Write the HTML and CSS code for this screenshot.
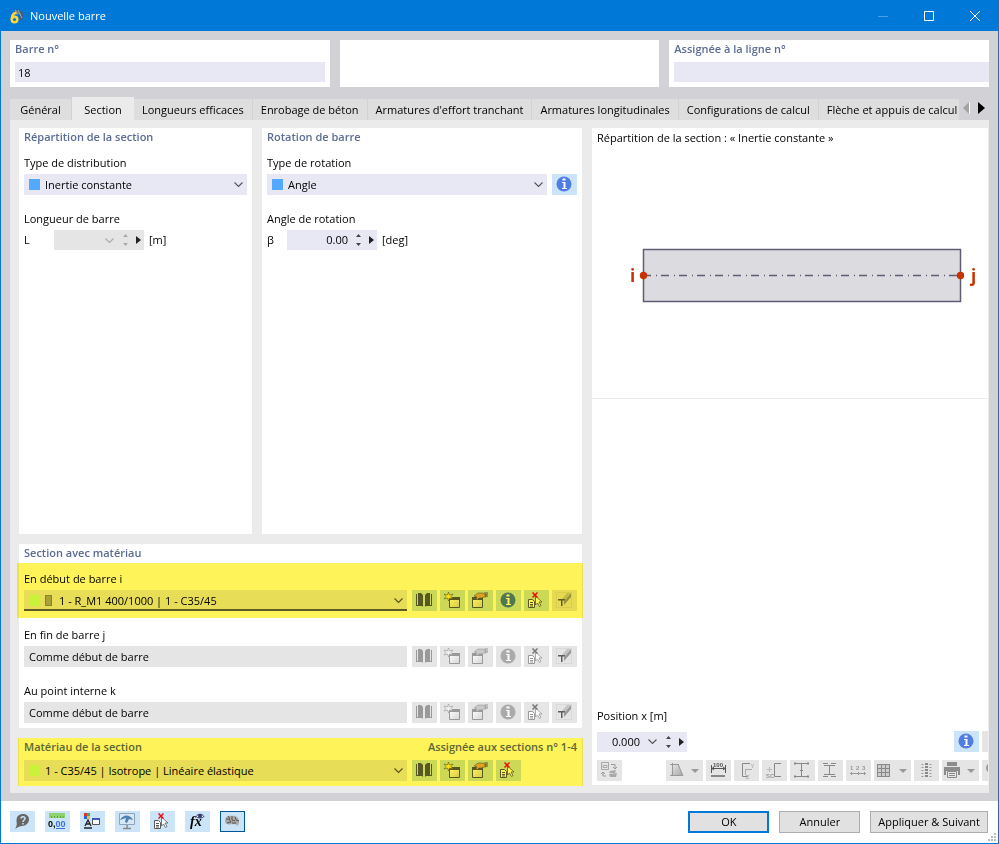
FILE: index.html
```
<!DOCTYPE html>
<html lang="fr">
<head>
	<meta charset="UTF-8">
	<title>Nouvelle barre</title>
	<meta name="viewport" content="width=device-width,initial-scale=1">
	<link rel="stylesheet" href="styles.css">
</head>
<body>
	<!-- icon set -->
	<svg class="defs" width="0" height="0" aria-hidden="true">
		<defs>
			<linearGradient id="fade" x1="0" y1="0" x2="1" y2="1">
				<stop offset="0" stop-color="#eee"/><stop offset="1" stop-color="#777"/>
			</linearGradient>
			<linearGradient id="paper" x1="0" y1="0" x2="1" y2="1">
				<stop offset="0" stop-color="#fff"/><stop offset="1" stop-color="#d4d4d4"/>
			</linearGradient>
		</defs>
		<symbol id="book" viewBox="0 0 25 21">
			<path d="M4 4h1v11h5v1H4zM20 4h-1v11h-5v1h6z" fill="currentColor"/>
			<path d="M6 3h3l2 2v12l-2-2H6zM18 3h-3l-2 2v12l2-2h3z" fill="currentColor"/>
		</symbol>
		<symbol id="new" viewBox="0 0 25 21">
			<path d="M9.500 8.500h10v9h-10z" fill="url(#paper)" stroke="currentColor"/>
			<path d="M9 7h11v3H9z" fill="currentColor"/>
			<path d="M8.500 2l1 3 3.500-1-2 2.500 2 2.500-3.500-1-1 3-1-3-3.500 1 2-2.500-2-2.500 3.500 1z" class="star" stroke="currentColor" stroke-width=".6"/>
		</symbol>
		<symbol id="edit" viewBox="0 0 25 21">
			<path d="M4.500 8.500h10v9h-10z" fill="url(#paper)" stroke="currentColor"/>
			<path d="M4 7h11v3H4z" fill="currentColor"/>
			<path d="M6 6l4-3h5l1 1h2v3h-2l-2 1h-3l-2 2-1-1 1-2z" class="hand" stroke="currentColor" stroke-width=".6"/>
			<path d="M16 2h4v5h-3z" fill="currentColor" opacity=".5"/>
		</symbol>
		<symbol id="info" viewBox="0 0 25 21">
			<circle cx="12" cy="10" r="7.500" class="disc"/>
			<path d="M10.500 4.500h3v2h-3zM10 8h3.500v6H15v1h-5v-1h1.500V9H10z" fill="#fff"/>
		</symbol>
		<symbol id="remove" viewBox="0 0 25 21">
			<path d="M4.500 9.500h4l2 2v6h-6z" fill="#fff" stroke="currentColor"/>
			<path d="M6 12.500h3M6 14.500h3M6 16h3" stroke="currentColor" fill="none"/>
			<path d="M11.500 6v9l2-2 2 3.500 1.500-1-2-3.500h3z" fill="#fff" stroke="currentColor" stroke-width=".8"/>
			<path d="M8.500 2.500l5 5M13.500 2.500l-5 5" class="cross" fill="none" stroke-width="1.500"/>
		</symbol>
		<symbol id="pencil" viewBox="0 0 25 21">
			<path d="M4.500 2.500h15v15h-15z" fill="none" stroke="currentColor" opacity=".15"/>
			<path d="M19 3v4l-7 8v-4z" fill="#999"/>
			<path d="M19 3h-4l-5 6 2 2z" fill="#c4c4c4"/>
			<path d="M6 9h7v1.500h-2.500V16H9v-5.500H6z" fill="#606060"/>
		</symbol>
		<symbol id="chevron" viewBox="0 0 11 7">
			<path d="M1.500 1.500l4 4 4-4" fill="none" stroke="currentColor" stroke-width="1.100"/>
		</symbol>
		<symbol id="updown" viewBox="0 0 7 12">
			<path d="M1 3l2.500-3L6 3zM1 9l2.500 3L6 9z" fill="currentColor"/>
		</symbol>
		<symbol id="right" viewBox="0 0 5 8">
			<path d="M0 0l5 4-5 4z" fill="currentColor"/>
		</symbol>
		<symbol id="down" viewBox="0 0 8 4">
			<path d="M0 0h8L4 4z" fill="currentColor"/>
		</symbol>
	</svg>

	<header class="titlebar">
		<svg class="app-icon" viewBox="0 0 16 16" aria-hidden="true">
			<path d="M3 5l5-4 6 3 1 4-3 5-2-2V6z" fill="#46607c"/>
			<path d="M4 5l5 1M6 2l6 5M9 2l4 8" stroke="#8fa9bd" fill="none"/>
			<path d="M7.500 4.500c-3 1-5 3-4.500 6.500" stroke="#fdd53b" stroke-width="2.500" fill="none"/>
			<circle cx="5.500" cy="11.500" r="2.800" stroke="#fdd53b" stroke-width="2.500" fill="none"/>
		</svg>
		<h1>Nouvelle barre</h1>
		<div class="win-buttons">
			<button type="button" aria-label="Réduire" disabled><svg viewBox="0 0 10 10"><path d="M0 5.500h10" stroke="#4aa0e6"/></svg></button>
			<button type="button" aria-label="Agrandir"><svg viewBox="0 0 10 10"><path d="M.5.5h9v9h-9z" stroke="#fff" fill="none"/></svg></button>
			<button type="button" aria-label="Fermer"><svg viewBox="0 0 10 10"><path d="M0 0l10 10M10 0L0 10" stroke="#fff"/></svg></button>
		</div>
	</header>

	<main class="frame">
		<div class="top">
			<div class="card">
				<label class="title" for="barre">Barre n°</label>
				<input class="field" id="barre" type="text" value="18">
			</div>
			<div class="card"></div>
			<div class="card card-cut">
				<label class="title" for="ligne">Assignée à la ligne n°</label>
				<input class="field" id="ligne" type="text">
			</div>
		</div>

		<div class="tabs">
			<div class="tablist" role="tablist">
				<button type="button" role="tab">Général</button>
				<button type="button" role="tab" class="active" aria-selected="true">Section</button>
				<button type="button" role="tab">Longueurs efficaces</button>
				<button type="button" role="tab">Enrobage de béton</button>
				<button type="button" role="tab">Armatures d'effort tranchant</button>
				<button type="button" role="tab">Armatures longitudinales</button>
				<button type="button" role="tab">Configurations de calcul</button>
				<button type="button" role="tab">Flèche et appuis de calcul</button>
			</div>
			<button type="button" class="scroll" aria-label="Onglets précédents" disabled><svg viewBox="0 0 7 12"><path d="M6 0v12L0 6z" fill="#a3a3a3"/><path d="M6.500 0v12" stroke="#fff"/></svg></button>
			<button type="button" class="scroll" aria-label="Onglets suivants"><svg viewBox="0 0 7 12"><path d="M0 0l7 6-7 6z" fill="#000"/></svg></button>
		</div>

		<div class="content">
			<div class="left">
				<section class="card">
					<h2 class="title">Répartition de la section</h2>
					<div class="group">
						<label for="distribution">Type de distribution</label>
						<div class="line">
							<div class="combo">
								<span class="swatch blue"></span>
								<select id="distribution"><option>Inertie constante</option></select>
								<svg class="chevron"><use href="#chevron"/></svg>
							</div>
						</div>
					</div>
					<div class="group">
						<span class="label">Longueur de barre</span>
						<div class="line">
							<label class="sym" for="longueur">L</label>
							<div class="spin disabled">
								<input id="longueur" type="text" disabled>
								<svg class="chevron"><use href="#chevron"/></svg>
								<svg class="updown"><use href="#updown"/></svg>
								<svg class="right"><use href="#right"/></svg>
							</div>
							<span>[m]</span>
						</div>
					</div>
				</section>

				<section class="card">
					<h2 class="title">Rotation de barre</h2>
					<div class="group">
						<label for="rotation">Type de rotation</label>
						<div class="line">
							<div class="combo">
								<span class="swatch blue"></span>
								<select id="rotation"><option>Angle</option></select>
								<svg class="chevron"><use href="#chevron"/></svg>
							</div>
							<button type="button" class="tool" aria-label="Informations"><svg><use href="#info"/></svg></button>
						</div>
					</div>
					<div class="group">
						<span class="label">Angle de rotation</span>
						<div class="line">
							<label class="sym small" for="angle">β</label>
							<div class="spin">
								<input id="angle" type="text" value="0.00">
								<svg class="updown"><use href="#updown"/></svg>
								<svg class="right"><use href="#right"/></svg>
							</div>
							<span>[deg]</span>
						</div>
					</div>
				</section>

				<section class="card wide">
					<h2 class="title">Section avec matériau</h2>
					<div class="group marked">
						<label for="debut">En début de barre i</label>
						<div class="line">
							<div class="combo focus">
								<span class="swatch green"></span>
								<span class="profile"></span>
								<select id="debut"><option>1 - R_M1 400/1000 | 1 - C35/45</option></select>
								<svg class="chevron"><use href="#chevron"/></svg>
							</div>
							<div class="tools">
								<button type="button" class="tool" aria-label="Bibliothèque"><svg><use href="#book"/></svg></button>
								<button type="button" class="tool" aria-label="Nouvelle section"><svg><use href="#new"/></svg></button>
								<button type="button" class="tool" aria-label="Modifier"><svg><use href="#edit"/></svg></button>
								<button type="button" class="tool" aria-label="Informations"><svg><use href="#info"/></svg></button>
								<button type="button" class="tool" aria-label="Supprimer"><svg><use href="#remove"/></svg></button>
								<button type="button" class="tool" aria-label="Dessiner" disabled><svg><use href="#pencil"/></svg></button>
							</div>
						</div>
					</div>
					<div class="group">
						<label for="fin">En fin de barre j</label>
						<div class="line">
							<input class="field" id="fin" type="text" value="Comme début de barre" disabled>
							<div class="tools">
								<button type="button" class="tool" aria-label="Bibliothèque" disabled><svg><use href="#book"/></svg></button>
								<button type="button" class="tool" aria-label="Nouvelle section" disabled><svg><use href="#new"/></svg></button>
								<button type="button" class="tool" aria-label="Modifier" disabled><svg><use href="#edit"/></svg></button>
								<button type="button" class="tool" aria-label="Informations" disabled><svg><use href="#info"/></svg></button>
								<button type="button" class="tool" aria-label="Supprimer" disabled><svg><use href="#remove"/></svg></button>
								<button type="button" class="tool" aria-label="Dessiner" disabled><svg><use href="#pencil"/></svg></button>
							</div>
						</div>
					</div>
					<div class="group">
						<label for="interne">Au point interne k</label>
						<div class="line">
							<input class="field" id="interne" type="text" value="Comme début de barre" disabled>
							<div class="tools">
								<button type="button" class="tool" aria-label="Bibliothèque" disabled><svg><use href="#book"/></svg></button>
								<button type="button" class="tool" aria-label="Nouvelle section" disabled><svg><use href="#new"/></svg></button>
								<button type="button" class="tool" aria-label="Modifier" disabled><svg><use href="#edit"/></svg></button>
								<button type="button" class="tool" aria-label="Informations" disabled><svg><use href="#info"/></svg></button>
								<button type="button" class="tool" aria-label="Supprimer" disabled><svg><use href="#remove"/></svg></button>
								<button type="button" class="tool" aria-label="Dessiner" disabled><svg><use href="#pencil"/></svg></button>
							</div>
						</div>
					</div>
				</section>

				<section class="card wide marked material">
					<div class="heads">
						<label class="title" for="materiau">Matériau de la section</label>
						<span class="title">Assignée aux sections n° 1-4</span>
					</div>
					<div class="line">
						<div class="combo">
							<span class="swatch green"></span>
							<select id="materiau"><option>1 - C35/45 | Isotrope | Linéaire élastique</option></select>
							<svg class="chevron"><use href="#chevron"/></svg>
						</div>
						<div class="tools">
							<button type="button" class="tool" aria-label="Bibliothèque"><svg><use href="#book"/></svg></button>
							<button type="button" class="tool" aria-label="Nouveau matériau"><svg><use href="#new"/></svg></button>
							<button type="button" class="tool" aria-label="Modifier"><svg><use href="#edit"/></svg></button>
							<button type="button" class="tool" aria-label="Supprimer"><svg><use href="#remove"/></svg></button>
						</div>
					</div>
				</section>
			</div>

			<section class="card preview">
				<div class="drawing">
					<p>Répartition de la section : « Inertie constante »</p>
					<svg viewBox="0 0 396 60">
						<path d="M51.500 4.500h317v52h-317z" fill="#dcdbe0" stroke="#5f5c73" stroke-width="1.500"/>
						<path d="M51 30.500h317" stroke="#5f5c73" stroke-width="1.500" stroke-dasharray="8 5 1 4"/>
						<circle cx="51.500" cy="30.500" r="3.700"/>
						<circle cx="368.500" cy="30.500" r="3.700"/>
						<text x="38" y="37">i</text>
						<text x="379" y="37">j</text>
					</svg>
				</div>
				<div class="graph">
					<label for="position">Position x [m]</label>
					<div class="line">
						<div class="spin">
							<input id="position" type="text" value="0.000">
							<svg class="chevron"><use href="#chevron"/></svg>
							<svg class="updown"><use href="#updown"/></svg>
							<svg class="right"><use href="#right"/></svg>
						</div>
						<div class="tools end">
							<button type="button" class="tool" aria-label="Informations"><svg><use href="#info"/></svg></button>
							<button type="button" class="tool cut" aria-label="Plus" disabled></button>
						</div>
					</div>
					<div class="toolbar">
						<button type="button" class="tool first" aria-label="Échanger" disabled>
							<svg viewBox="0 0 25 21"><path d="M4.500 2.500h7v7h-7zM6 5.500h4v2H6z" stroke="#aaa" fill="none"/><path d="M14 4.500h4v4M16 7l2 2 2-2M9 16H6v-4M4 14l2-2 2 2" stroke="#999" fill="none"/><path d="M13 11l6-1-1 3h-6zM12 14l8-1-1 4h-6z" fill="#aaa"/></svg>
						</button>
						<button type="button" class="tool drop" aria-label="Contraintes" disabled>
							<svg viewBox="0 0 25 21"><path d="M6 4h6l5 12H5z" fill="url(#fade)" opacity=".6"/><path d="M4 4.500h9M6.500 3v13M4 15.500h13M12 4l5 12" stroke="#999" fill="none"/></svg>
							<svg class="down"><use href="#down"/></svg>
						</button>
						<button type="button" class="tool" aria-label="Dimensions">
							<svg viewBox="0 0 25 21"><path d="M5.500 5v8M19.500 5v8M5 8.500h15M8 7l-2 1.500L8 10M17 7l2 1.500-2 1.500" stroke="#555" fill="none"/><path d="M5 15h14v2H5z" fill="#888"/><text x="12" y="7" class="micro dark" text-anchor="middle">100</text></svg>
						</button>
						<button type="button" class="tool" aria-label="Axes principaux" disabled>
							<svg viewBox="0 0 25 21"><path d="M16 3.500H8.500v13H14" stroke="#888" fill="none"/><path d="M11 9.500h7M11.500 9v6" stroke="#aaa" fill="none"/><path d="M17 4l1.500 2L20 4M18.500 6v2M12 15.500h3l-3 3h3" stroke="#bbb" fill="none"/></svg>
						</button>
						<button type="button" class="tool" aria-label="Centre de cisaillement" disabled>
							<svg viewBox="0 0 25 21"><path d="M19 3.500h-6.500v13H19" stroke="#888" fill="none"/><path d="M5 9.500h5M7.500 7v5" stroke="#bbb"/><text x="4" y="18" class="micro">SC</text></svg>
						</button>
						<button type="button" class="tool" aria-label="Contour" disabled>
							<svg viewBox="0 0 25 21"><path d="M4 3.500h15M4 16.500h15M11.500 4v12M5 2v3M18 2v3M5 15v3M18 15v3M10 10.500h3" stroke="#888" fill="none"/></svg>
						</button>
						<button type="button" class="tool" aria-label="Profil" disabled>
							<svg viewBox="0 0 25 21"><path d="M5 3.500h5M13 3.500h5M5 16.500h5M13 16.500h5M6 5.500h11M6 14.500h11M11.500 6v9" stroke="#888" fill="none"/></svg>
						</button>
						<button type="button" class="tool" aria-label="Numérotation" disabled>
							<svg viewBox="0 0 25 21"><path d="M4 13.500h16M5.500 12v3M12.500 12v3M18.500 12v3" stroke="#999" fill="none"/><text x="4" y="10" class="micro">1</text><text x="10" y="10" class="micro">2</text><text x="16" y="10" class="micro">3</text></svg>
						</button>
						<button type="button" class="tool drop" aria-label="Grille" disabled>
							<svg viewBox="0 0 25 21"><path d="M3 4h13v13H3z" fill="#ccc"/><path d="M3.500 4v13M7.500 4v13M11.500 4v13M15.500 4v13M3 4.500h13M3 8.500h13M3 12.500h13M3 16.500h13" stroke="#888" fill="none"/></svg>
							<svg class="down"><use href="#down"/></svg>
						</button>
						<button type="button" class="tool" aria-label="Valeurs" disabled>
							<svg viewBox="0 0 25 21"><path d="M8.500 4v13M16.500 4v13" stroke="#999" stroke-width="2" stroke-dasharray="1 2"/><path d="M12.500 3v15" stroke="#888" stroke-width="3" stroke-dasharray="2 1"/></svg>
						</button>
						<button type="button" class="tool drop" aria-label="Imprimer" disabled>
							<svg viewBox="0 0 25 21"><path d="M5 2h10v4H5zM2 7h16v8h-2v-4H4v4H2z" fill="#8c8c8c"/><path d="M5.500 11.500h9v6h-9zM7 13.500h6M7 15.500h6" fill="none" stroke="#8c8c8c"/></svg>
							<svg class="down"><use href="#down"/></svg>
						</button>
						<button type="button" class="tool" aria-label="Recherche" disabled>
							<svg viewBox="0 0 25 21"><circle cx="9" cy="8" r="4" fill="none" stroke="#999" stroke-width="2"/></svg>
						</button>
					</div>
				</div>
			</section>
		</div>
	</main>

	<footer class="footer">
		<div class="shortcuts">
			<button type="button" class="tool" aria-label="Aide">
				<svg viewBox="0 0 25 21"><path d="M13 3c4 0 6 2.500 6 5.500S16 15 12 15c-2 0-4 1-7 3 2-3 2-5 1.500-8C6.500 5 9 3 13 3z" fill="#666"/><path d="M11 7.500c0-2.500 4-2.500 4 0 0 1.500-2 1.500-2 3.500M13 12v1.500" stroke="#cce4f7" stroke-width="1.500" fill="none"/></svg>
			</button>
			<button type="button" class="tool" aria-label="Unités">
				<svg viewBox="0 0 25 21"><path d="M4 2h16v5H4z" fill="#8fd36e"/><path d="M6.500 5v2M9.500 5v2M12.500 5v2M15.500 5v2M18 5v2" stroke="#5ea244"/><text x="3" y="16" class="digits">0,<tspan fill="#3f72d8">00</tspan></text><path d="M11 17.500h9" stroke="#3f72d8"/></svg>
			</button>
			<button type="button" class="tool" aria-label="Affichage">
				<svg viewBox="0 0 25 21"><path d="M4 2h3v3H4z" fill="#e03030"/><path d="M7 2h3v3H7z" fill="#36b54a"/><path d="M4 5h3v3H4z" fill="#2f62d6"/><path d="M7 5h3v3H7z" fill="#f2c62b"/><path d="M5 15l3-6 3 6M6 13h4M4 17h8" stroke="#222" stroke-width="1.300" fill="none"/><path d="M12.500 7.500h7v6h-7z" fill="#fff" stroke="#555"/><path d="M12 7h8v2h-8z" fill="#3b5bbd"/></svg>
			</button>
			<button type="button" class="tool" aria-label="Vue">
				<svg viewBox="0 0 25 21"><path d="M4.500 2.500h15v11h-15z" fill="#d6e8f7" stroke="#90a4b6"/><path d="M5 9c3-6 10-6 13 0l-4-1-2 4-2-1 1-4z" fill="#4e7fb5"/><path d="M12 14v3M8 17.500h8" stroke="#888" stroke-width="1.500"/></svg>
			</button>
			<button type="button" class="tool" aria-label="Effacer la sélection"><svg><use href="#remove"/></svg></button>
			<button type="button" class="tool" aria-label="Formule">
				<svg viewBox="0 0 25 21"><text x="5" y="15" class="formula">fx</text><path d="M11 5.500c2-3 6-3 8 0-2 2-6 2-8 0z" fill="#fff" stroke="#33386e"/><circle cx="15" cy="5" r="2" fill="#33386e"/></svg>
			</button>
			<button type="button" class="tool on" aria-label="Intelligence">
				<svg viewBox="0 0 25 21"><path d="M5 10c0-5 4-6 7-5 4-1 7 2 7 5 0 2 0 3-2 5-1-3-3-1-5-2-3 1-7 1-7-3z" fill="#aaa"/><path d="M6 8h3l2 3M8 5l2 3M12 5v4l3 1M15 6l1 3 3 1M7 12l4-1M12 12h4" stroke="#555" fill="none"/></svg>
			</button>
		</div>
		<div class="actions">
			<button type="button" class="btn default">OK</button>
			<button type="button" class="btn">Annuler</button>
			<button type="button" class="btn">Appliquer &amp; Suivant</button>
		</div>
		<svg class="grip" viewBox="0 0 8 8" aria-hidden="true"><path d="M6 0h2v2H6zM3 3h2v2H3zM6 3h2v2H6zM0 6h2v2H0zM3 6h2v2H3zM6 6h2v2H6z" fill="#bbb"/></svg>
	</footer>
</body>
</html>
```
FILE: styles.css
```
*{
	box-sizing: border-box;
}
body{
	margin: 0;
	min-height: 100vh;
	display: flex;
	flex-direction: column;
	border: 1px solid #0078d7;
	background: #fff;
	color: #000;
	font: 11px/18px "Open Sans","Noto Sans",sans-serif;
}
h1,h2,p{
	margin: 0;
	font-size: inherit;
	font-weight: normal;
}
button,input,select{
	margin: 0;
	padding: 0;
	border: 0;
	border-radius: 0;
	background: none;
	color: inherit;
	font: inherit;
}
svg{
	display: block;
	flex: none;
}
label{
	display: block;
}
.defs{
	position: absolute;
}

/* title bar */
.titlebar{
	display: flex;
	align-items: center;
	height: 30px;
	padding-left: 8px;
	background: #0078d7;
	color: #fff;
}
.titlebar h1{
	margin-left: 5px;
}
.app-icon{
	width: 16px;
	height: 16px;
}
.win-buttons{
	display: flex;
	margin-left: auto;
}
.win-buttons button{
	width: 46px;
	height: 30px;
}
.win-buttons svg{
	width: 10px;
	height: 10px;
	margin: 0 auto;
}

/* frame */
.frame{
	flex: 1;
	display: flex;
	flex-direction: column;
	padding: 9px 9px 8px;
	background: #d2d1d6;
}
.card{
	min-width: 0;
	padding: 0 5px 5px;
	background: #fff;
}
.title{
	color: #5c6c94;
	font-weight: 600;
}
.top{
	display: grid;
	grid-template-columns: repeat(3,1fr);
	gap: 10px;
}
.top .card{
	height: 47px;
}
.top .title{
	margin-bottom: 4px;
}
.top .field{
	height: 20px;
	padding-left: 3px;
}
.top .card-cut{
	padding-right: 0;
}
.field{
	display: block;
	flex: 1;
	width: 100%;
	min-width: 0;
	height: 21px;
	padding: 0 5px;
	background: #e7e8f3;
}
.field:disabled{
	background: #e5e5e5;
}

/* tabs */
.tabs{
	display: flex;
	align-items: flex-end;
	height: 33px;
}
.tablist{
	flex: 1;
	display: flex;
	align-items: flex-end;
	min-width: 0;
	overflow: hidden;
}
.tablist button{
	flex: none;
	min-width: 62px;
	height: 21px;
	padding: 0 8px;
	border-right: 1px solid #d2d1d6;
	background: #dedede;
}
.tablist .active{
	height: 23px;
	padding-top: 2px;
	border: 0;
	background: #ebebeb;
}
.scroll{
	width: 15px;
	height: 25px;
}
.scroll svg{
	width: 7px;
	height: 12px;
	margin: 0 auto;
}

/* content */
.content{
	flex: 1;
	display: grid;
	grid-template-columns: 563px minmax(0,1fr);
	gap: 10px;
	padding: 8px 1px 7px 9px;
	background: #ebebeb;
}
.left{
	display: grid;
	grid-template-columns: 233px minmax(0,1fr);
	grid-template-rows: 1fr auto auto;
	gap: 10px;
}
.wide{
	grid-column: 1 / -1;
}
.group{
	margin-top: 15px;
}
.title + .group{
	margin-top: 8px;
}
.label{
	display: block;
}
.line{
	display: flex;
	align-items: center;
	gap: 5px;
}
.group .line{
	margin-top: 2px;
}
.combo{
	flex: 1;
	display: flex;
	align-items: center;
	min-width: 0;
	height: 21px;
	padding: 0 3px 0 5px;
	background: #e7e8f3;
}
.combo select{
	flex: 1;
	min-width: 0;
	height: 21px;
	margin-left: 5px;
	appearance: none;
}
.combo.focus{
	box-shadow: inset 0 -2px #5f5f66;
}
.chevron{
	width: 11px;
	height: 7px;
	color: #555;
}
.swatch{
	width: 11px;
	height: 11px;
}
.blue{
	background: #54a8ff;
}
.green{
	background: #c8ffa0;
}
.profile{
	width: 7px;
	height: 11px;
	margin: 0 2px 0 5px;
	border: 1px solid #8a8a80;
	background: #a8a8a0;
}
.sym{
	width: 25px;
}
.sym.small{
	width: 15px;
}
.spin{
	display: flex;
	align-items: center;
	gap: 7px;
	width: 90px;
	height: 20px;
	padding-right: 3px;
	background: #e7e8f3;
	color: #444;
}
.spin input{
	flex: 1;
	min-width: 0;
	width: 0;
	color: #000;
	text-align: right;
}
.spin.disabled{
	background: #e5e5e5;
}
.disabled .chevron,.disabled .updown{
	color: #aaa;
}
.updown{
	width: 7px;
	height: 12px;
}
.right{
	width: 5px;
	height: 8px;
	color: #222;
}

/* yellow marker */
.marked{
	position: relative;
}
.marked::after{
	content: "";
	position: absolute;
	inset: -7px -6px -7px -7px;
	background: #fff35a;
	mix-blend-mode: multiply;
	pointer-events: none;
}
.material.marked::after{
	inset: 0 -1px 0 -1px;
}
.heads{
	display: flex;
	justify-content: space-between;
	margin-bottom: 4px;
}

/* tool buttons */
.tools,.toolbar{
	display: flex;
	gap: 3px;
}
.marked .tools{
	width: 165px;
}
.tool{
	--star: #fff04a;
	--hand: #e0a860;
	--disc: #4f7de4;
	--cross: #e81010;
	flex: none;
	display: flex;
	align-items: center;
	width: 25px;
	height: 21px;
	background: #cce4f7;
	color: #5a5a5a;
}
.tool:disabled{
	--star: #f2f2f2;
	--hand: #c8c8c8;
	--disc: #aaa;
	--cross: #777;
	background: #e5e5e5;
	color: #999;
}
.tool svg{
	width: 25px;
	height: 21px;
}
.star{
	fill: var(--star);
}
.hand{
	fill: var(--hand);
}
.disc{
	fill: var(--disc);
}
.cross{
	stroke: var(--cross);
}
.tool .down{
	width: 8px;
	height: 4px;
}
.tool.drop{
	width: 37px;
}
.tool.cut{
	width: 6px;
}
.toolbar .tool{
	background: #e5e5e5;
}
.toolbar .first{
	margin-right: 41px;
}
.micro{
	font: bold 6px "Liberation Sans",sans-serif;
	fill: #999;
}
.micro.dark{
	fill: #555;
}

/* preview */
.preview{
	display: flex;
	flex-direction: column;
	margin-bottom: 1px;
	padding: 0 0 4px;
}
.drawing{
	flex: 12 1 0;
	display: flex;
	flex-direction: column;
	padding-top: 1px;
	border-bottom: 1px solid #ebebeb;
}
.drawing p{
	padding: 0 0 5px 5px;
}
.drawing svg{
	width: 100%;
	height: auto;
	margin: auto 0;
	fill: #c83200;
	font: bold 17px "Open Sans",sans-serif;
}
.graph{
	flex: 17 1 0;
	display: flex;
	flex-direction: column;
	justify-content: flex-end;
	padding-left: 5px;
}
.graph .line{
	margin: 6px 0 8px;
}
.end{
	margin-left: auto;
}
.toolbar{
	overflow: hidden;
}

/* footer */
.footer{
	position: relative;
	display: flex;
	justify-content: space-between;
	padding: 10px 10px 10px 9px;
}
.shortcuts,.actions{
	display: flex;
	gap: 10px;
}
.tool.on{
	border: 1px solid #00559b;
}
.tool.on svg{
	margin: -1px;
}
.digits{
	font: bold 9px "Liberation Sans",sans-serif;
}
.formula{
	font: italic bold 14px "Liberation Serif",serif;
}
.btn{
	min-width: 81px;
	height: 22px;
	padding: 0 7px;
	border: 1px solid #adadad;
	background: #e1e1e1;
}
.btn.default{
	border: 2px solid #0078d7;
}
.grip{
	position: absolute;
	right: 2px;
	bottom: 2px;
	width: 8px;
	height: 8px;
}
```
